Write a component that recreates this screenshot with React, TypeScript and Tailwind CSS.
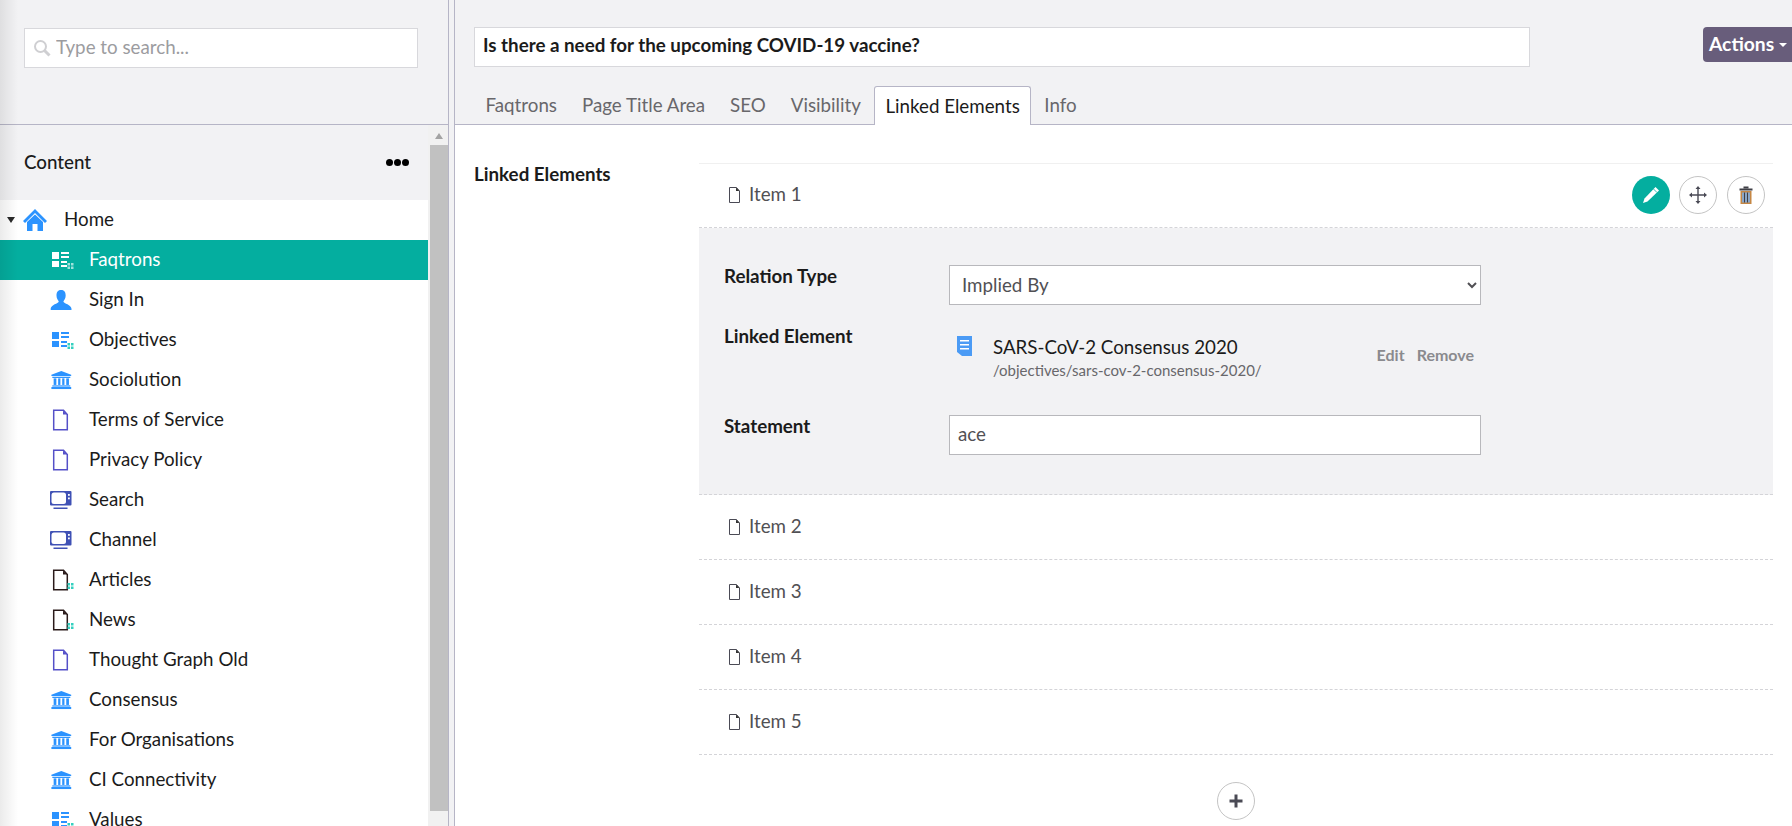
import React from "react";

type IconProps = { color?: string; dots?: string };

const Dots = ({ color }: { color: string }) => (
  <g fill={color}>
    <rect x="17.500" y="14" width="2.500" height="2.500" />
    <rect x="21" y="14" width="2.500" height="2.500" />
    <rect x="17.500" y="17.500" width="2.500" height="2.500" />
    <rect x="21" y="17.500" width="2.500" height="2.500" />
  </g>
);

const HomeIcon = () => (
  <svg width="24" height="22" viewBox="0 0 24 22" fill="#2b93ff">
    <path d="M12 0 L24 12 L22 14 L12 4 L2 14 L0 12 Z" />
    <path d="M4 13 L12 5.500 L20 13 V22 H14.500 V15 H9.500 V22 H4 Z" />
  </svg>
);

const ListIcon = ({ color = "#2b93ff", dots = "#35d0c0" }: IconProps) => (
  <svg width="24" height="22" viewBox="0 0 24 22" fill={color}>
    <rect x="2" y="3" width="7" height="7" />
    <rect x="2" y="12" width="7" height="6" />
    <rect x="11" y="3" width="8" height="2" />
    <rect x="11" y="7" width="8" height="2" />
    <rect x="11" y="12" width="6" height="2" />
    <rect x="11" y="16" width="6" height="2" />
    <Dots color={dots} />
  </svg>
);

const UserIcon = () => (
  <svg width="24" height="22" viewBox="0 -1 26 24" fill="#2b93ff">
    <path d="M12 0 C16 0 17 3 17 6 C17 9 15.500 11 14.500 12.500 C15 15 23 15.500 23.500 21 Q23.500 22 22 22 H2 Q0.500 22 0.500 21 C1 15.500 9 15 9.500 12.500 C8.500 11 7 9 7 6 C7 3 8 0 12 0 Z" />
  </svg>
);

const BankIcon = () => (
  <svg width="24" height="22" viewBox="0 0 24 22" fill="#2b93ff">
    <g transform="translate(0.500 2) scale(0.900 0.820)">
      <path d="M12 0 L23 4.500 V6 H1 V4.500 Z" />
      <rect x="2" y="7" width="20" height="1.500" />
      <rect x="3.500" y="9" width="3" height="8" />
      <rect x="8.500" y="9" width="2.500" height="8" />
      <rect x="13" y="9" width="2.500" height="8" />
      <rect x="17.500" y="9" width="3" height="8" />
      <rect x="2" y="17.500" width="20" height="1.500" />
      <rect x="1" y="19.500" width="22" height="2.500" />
    </g>
  </svg>
);

const DocIcon = ({ color = "#5550c8", dots }: IconProps) => (
  <svg width="24" height="22" viewBox="0 0 24 22" fill="none">
    <path d="M3.700 1.200 H13.500 L17.300 5.500 V20.800 H3.700 Z" stroke={color} strokeWidth="1.500" fill="#fff" />
    <path d="M13 1.500 L17 5.500 H13 Z" fill={color} />
    {dots && <Dots color={dots} />}
  </svg>
);

const TvIcon = () => (
  <svg width="24" height="22" viewBox="0 0 24 22">
    <rect x="0" y="2" width="21.500" height="14.500" rx="1" fill="#3f51b5" />
    <rect x="1.500" y="3.500" width="14.500" height="11.500" rx="2.500" fill="#fff" />
    <rect x="18" y="5" width="1.800" height="1.800" fill="#fff" />
    <rect x="18" y="8.500" width="1.800" height="1.800" fill="#fff" />
    <rect x="3.500" y="18.500" width="14" height="1.500" fill="#3f51b5" />
  </svg>
);

const rows: { label: string; icon: React.ReactNode }[] = [
  { label: "Sign In", icon: <UserIcon /> },
  { label: "Objectives", icon: <ListIcon /> },
  { label: "Sociolution", icon: <BankIcon /> },
  { label: "Terms of Service", icon: <DocIcon /> },
  { label: "Privacy Policy", icon: <DocIcon /> },
  { label: "Search", icon: <TvIcon /> },
  { label: "Channel", icon: <TvIcon /> },
  { label: "Articles", icon: <DocIcon color="#2a1a1a" dots="#35d0c0" /> },
  { label: "News", icon: <DocIcon color="#2a1a1a" dots="#35d0c0" /> },
  { label: "Thought Graph Old", icon: <DocIcon /> },
  { label: "Consensus", icon: <BankIcon /> },
  { label: "For Organisations", icon: <BankIcon /> },
  { label: "CI Connectivity", icon: <BankIcon /> },
  { label: "Values", icon: <ListIcon /> },
];

const ItemDoc = () => (
  <svg width="13" height="16" viewBox="0 0 13 16" fill="#fff" stroke="#4a4a55" strokeWidth="1">
    <path d="M1.500 0.500 H8.500 L11.500 4 V15.500 H1.500 Z" />
    <path d="M8 0.500 L11.500 4 H8 Z" fill="#333" stroke="none" />
  </svg>
);

const ItemRow = ({ label }: { label: string }) => (
  <div className="flex h-[65px] items-center border-b border-dashed border-[#d4d4d8] pb-[1px] pl-[29px] text-[18.750px] text-[#515054]">
    <ItemDoc />
    <span className="ml-[8px]">{label}</span>
  </div>
);

const CircleButton = ({ children }: { children: React.ReactNode }) => (
  <button className="flex h-[38px] w-[38px] items-center justify-center rounded-full border border-[#c4c4c4] bg-white">
    {children}
  </button>
);

const tabs = ["Faqtrons", "Page Title Area", "SEO", "Visibility", "Linked Elements", "Info"];

export default function App() {
  return (
    <div className="flex h-screen w-full overflow-hidden bg-white font-['Lato','Noto_Sans',sans-serif] text-[#1b1b1b]">
      <aside className="relative flex w-[449px] shrink-0 flex-col border-r border-[#b6b5c6]">
        <div className="pointer-events-none absolute inset-y-0 left-0 w-[18px] bg-gradient-to-r from-black/[0.08] to-transparent" />
        <div className="flex h-[125px] shrink-0 items-start border-b border-[#b6b5c6] bg-[#f2f2f4] pl-[24px] pt-[28px]">
          <div className="flex h-[40px] w-[394px] items-center border border-[#d8d8dc] bg-white pl-[8px]">
            <svg width="18" height="18" viewBox="0 0 18 18" fill="none" stroke="#cfcfd2" strokeWidth="2">
              <circle cx="7.500" cy="7.500" r="5.500" />
              <path d="M11.500 11.500 L16.500 16.500" strokeWidth="3" />
            </svg>
            <input
              readOnly
              placeholder="Type to search..."
              className="ml-[5px] mb-[2px] w-[340px] bg-transparent text-[18.750px] outline-none placeholder:text-[#9c9ca0]"
            />
          </div>
        </div>
        <div className="flex min-h-0 flex-1">
          <div className="w-[428px] shrink-0">
            <div className="flex h-[75px] items-center justify-between bg-[#f2f2f4] pb-[1px] pl-[24px] pr-[19px]">
              <span className="text-[18.750px] font-medium">Content</span>
              <div className="flex gap-[1px]">
                <span className="h-[7px] w-[7px] rounded-full bg-black" />
                <span className="h-[7px] w-[7px] rounded-full bg-black" />
                <span className="h-[7px] w-[7px] rounded-full bg-black" />
              </div>
            </div>
            <div className="flex h-[40px] items-center pl-[7px] text-[18.750px]">
              <span className="h-0 w-0 border-x-[4.500px] border-t-[6px] border-x-transparent border-t-[#2a2a2a]" />
              <span className="ml-[8px]"><HomeIcon /></span>
              <span className="ml-[17px] mb-[1px]">Home</span>
            </div>
            <div className="flex h-[40px] items-center bg-[#04ae9f] pl-[50px] text-[18.750px] text-white">
              <ListIcon color="#fff" dots="#9fe2db" />
              <span className="ml-[15px] mb-[1px]">Faqtrons</span>
            </div>
            {rows.map((r) => (
              <div key={r.label} className="flex h-[40px] items-center pl-[50px] text-[18.750px]">
                {r.icon}
                <span className="ml-[15px] mb-[1px]">{r.label}</span>
              </div>
            ))}
          </div>
          <div className="flex w-[20px] flex-col items-center bg-[#f1f1f1] pl-[2px]">
            <span className="mt-[8px] h-0 w-0 border-x-[4.500px] border-b-[6px] border-x-transparent border-b-[#a3a3a3]" />
            <div className="mt-[6px] h-[666px] w-full bg-[#c1c1c1]" />
          </div>
        </div>
      </aside>

      <div className="w-[5px] shrink-0 bg-[#f2f2f4]" />

      <main className="flex min-w-0 flex-1 flex-col border-l border-[#b6b5c6]">
        <header className="h-[125px] shrink-0 border-b border-[#b6b5c6] bg-[#f2f2f4]">
          <div className="flex items-start pl-[19px] pt-[27px]">
            <input
              readOnly
              value="Is there a need for the upcoming COVID-19 vaccine?"
              className="h-[40px] w-[1056px] border border-[#d8d8dc] bg-white pb-[5px] pl-[8px] text-[18.750px] font-bold text-[#1b1b1b] outline-none"
            />
            <button className="ml-auto flex h-[35px] w-[89px] items-center rounded-l-[4px] bg-[#685d7b] pl-[6px] text-[19.250px] font-bold text-white">
              Actions
              <span className="ml-[5px] h-0 w-0 border-x-[4.500px] border-t-[4.500px] border-x-transparent border-t-white" />
            </button>
          </div>
          <div className="mt-[19px] flex h-[39px] pl-[18px] text-[18.750px] text-[#68676b]">
            {tabs.map((t) => (
              <div
                key={t}
                className={
                  t === "Linked Elements"
                    ? "-mb-px mx-[1px] flex h-[39px] items-center rounded-t-[3px] border border-b-0 border-[#b6b5c6] bg-white px-[10px] text-[#1b1b1b]"
                    : "mx-[1px] flex h-[38px] items-center px-[11.500px]"
                }
              >
                {t}
              </div>
            ))}
          </div>
        </header>

        <section className="flex min-h-0 flex-1 pl-[19px] pr-[19px] pt-[38px]">
          <h2 className="w-[225px] shrink-0 text-[18.750px] font-bold leading-[22px]">Linked Elements</h2>
          <div className="min-w-0 flex-1">
            <div className="flex h-[65px] items-center border-y border-t-[#f0f0f0] border-b-[#d4d4d8] pb-[2px] pl-[29px] [border-bottom-style:dashed] text-[18.750px] text-[#515054]">
              <ItemDoc />
              <span className="ml-[8px]">Item 1</span>
              <div className="ml-auto flex items-center gap-[9px] pr-[8px]">
                <button className="flex h-[38px] w-[38px] items-center justify-center rounded-full bg-[#04ae9f]">
                  <svg width="18" height="18" viewBox="0 0 18 18" fill="#fff">
                    <path d="M13.500 1 L17 4.500 L5.500 15.500 L1 17 L2.500 12.500 Z" />
                    <path d="M11.500 3 L15 6.500" stroke="#04ae9f" strokeWidth="0.800" />
                  </svg>
                </button>
                <CircleButton>
                  <svg width="18" height="18" viewBox="0 0 18 18" fill="#4a4a55">
                    <path d="M9 0 L11.500 3 H9.700 V8.300 H15 V6.500 L18 9 L15 11.500 V9.700 H9.700 V15 H11.500 L9 18 L6.500 15 H8.300 V9.700 H3 V11.500 L0 9 L3 6.500 V8.300 H8.300 V3 H6.500 Z" />
                  </svg>
                </CircleButton>
                <span className="ml-[1px]">
                  <CircleButton>
                    <svg width="14" height="18" viewBox="0 0 14 18">
                      <rect x="0.500" y="2.500" width="13" height="2" fill="#3f3f46" />
                      <rect x="4.500" y="0.500" width="5" height="2" fill="#3f3f46" />
                      <rect x="1.500" y="5" width="11" height="13" fill="#c58745" />
                      <rect x="3" y="6.500" width="8" height="10" fill="#8aa6c8" />
                      <rect x="5" y="6.500" width="1" height="10" fill="#3f3f46" />
                      <rect x="8" y="6.500" width="1" height="10" fill="#3f3f46" />
                    </svg>
                  </CircleButton>
                </span>
              </div>
            </div>

            <div className="h-[267px] border-b border-dashed border-[#d4d4d8] bg-[#f2f2f4] pl-[25px] pr-[292px] pt-[37px]">
              <div className="flex">
                <label className="w-[225px] shrink-0 text-[18.750px] font-bold leading-[22px]">Relation Type</label>
                <select className="h-[40px] flex-1 border border-[#b8b8bc] bg-white pb-[2px] pl-[8px] text-[18.750px] text-[#515054] outline-none">
                  <option>Implied By</option>
                </select>
              </div>
              <div className="mt-[20px] flex h-[70px]">
                <label className="w-[225px] shrink-0 text-[18.750px] font-bold leading-[22px]">Linked Element</label>
                <div className="flex flex-1 pl-[8px]">
                  <svg className="mt-[11px] shrink-0" width="15" height="20" viewBox="0 0 15 20">
                    <path d="M0 0 H15 V20 H5 L0 16 Z" fill="#4b9bf5" />
                    <rect x="3" y="4" width="9" height="1.500" fill="#fff" />
                    <rect x="3" y="8" width="9" height="1.500" fill="#fff" />
                    <rect x="3" y="12" width="9" height="1.500" fill="#fff" />
                  </svg>
                  <div className="ml-[21px] flex-1 pt-[12px]">
                    <div className="text-[18.750px] leading-[20px]">SARS-CoV-2 Consensus 2020</div>
                    <div className="mt-[4px] text-[15px] leading-[18px] text-[#68676b]">/objectives/sars-cov-2-consensus-2020/</div>
                  </div>
                  <div className="flex gap-[12px] pr-[7px] pt-[21px] text-[16px] font-bold leading-[18px] text-[#8a8a8e]">
                    <span>Edit</span>
                    <span>Remove</span>
                  </div>
                </div>
              </div>
              <div className="mt-[20px] flex">
                <label className="w-[225px] shrink-0 text-[18.750px] font-bold leading-[22px]">Statement</label>
                <input
                  readOnly
                  value="ace"
                  className="h-[40px] flex-1 border border-[#b8b8bc] bg-white pb-[4px] pl-[8px] text-[18.750px] text-[#515054] outline-none"
                />
              </div>
            </div>

            <ItemRow label="Item 2" />
            <ItemRow label="Item 3" />
            <ItemRow label="Item 4" />
            <ItemRow label="Item 5" />

            <div className="flex justify-center pt-[27px]">
              <button className="flex h-[38px] w-[38px] items-center justify-center rounded-full border border-[#c4c4c4] bg-white">
                <svg width="14" height="14" viewBox="0 0 14 14" fill="#4a4a55">
                  <rect x="5.500" y="0.500" width="3" height="13" />
                  <rect x="0.500" y="5.500" width="13" height="3" />
                </svg>
              </button>
            </div>
          </div>
        </section>
      </main>
    </div>
  );
}
